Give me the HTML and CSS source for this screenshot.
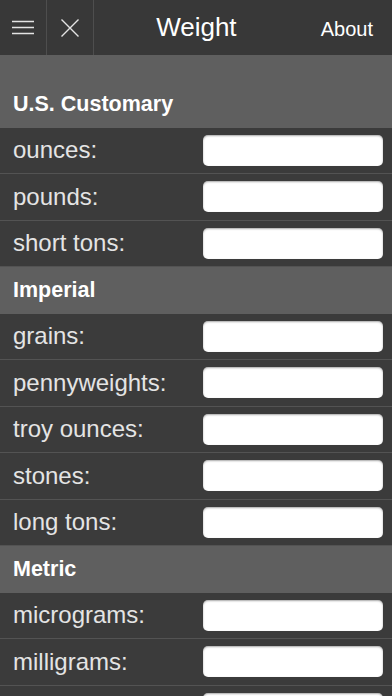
FILE: index.html
```html
<!DOCTYPE html>
<html lang="en">
<head>
    <meta charset="UTF-8">
    <meta name="viewport" content="width=device-width, initial-scale=1.0">
    <title>Weight</title>
    <link rel="stylesheet" href="styles.css">
</head>
<body>

<div class="topbar">
    <div class="bar-btn">
        <svg width="24" height="16" viewBox="0 0 24 16">
            <path d="M1 1.5h22M1 7.5h22M1 13.5h22" stroke="#e4e4e4" stroke-width="1.6" fill="none"/>
        </svg>
    </div>
    <div class="bar-btn">
        <svg width="20" height="20" viewBox="0 0 20 20">
            <path d="M1.5 1.5l17 17M18.5 1.5l-17 17" stroke="#e4e4e4" stroke-width="1.4" fill="none"/>
        </svg>
    </div>
    <div class="title">Weight</div>
    <div class="about">About</div>
</div>

<div class="spacer"></div>

<div class="section-title">U.S. Customary</div>
<div class="row"><label>ounces:</label><input type="text"></div>
<div class="row"><label>pounds:</label><input type="text"></div>
<div class="row"><label>short tons:</label><input type="text"></div>

<div class="section-title">Imperial</div>
<div class="row"><label>grains:</label><input type="text"></div>
<div class="row"><label>pennyweights:</label><input type="text"></div>
<div class="row"><label>troy ounces:</label><input type="text"></div>
<div class="row"><label>stones:</label><input type="text"></div>
<div class="row"><label>long tons:</label><input type="text"></div>

<div class="section-title">Metric</div>
<div class="row"><label>micrograms:</label><input type="text"></div>
<div class="row"><label>milligrams:</label><input type="text"></div>
<div class="row"><label></label><input type="text"></div>

</body>
</html>
```

FILE: styles.css
```css
html, body {
    margin: 0;
    padding: 0;
    height: 696px;
    overflow: hidden;
}
body {
    font-family: 'Liberation Sans', Arial, Helvetica, sans-serif;
    background-color: #3b3b3b;
    color: #e8e8e8;
}

.topbar {
    height: 55px;
    background: #383838;
    display: flex;
    align-items: stretch;
}
.bar-btn {
    width: 46px;
    border-right: 1.5px solid #4e4e4e;
    display: flex;
    align-items: center;
    justify-content: center;
}
.bar-btn svg { display: block; }
.title {
    flex: 1;
    display: flex;
    align-items: center;
    justify-content: center;
    font-size: 26px;
    color: #fff;
    padding-right: 22px;
    padding-bottom: 1px;
}
.about {
    display: flex;
    align-items: center;
    font-size: 20px;
    color: #fff;
    padding-right: 19px;
    padding-top: 3px;
}

.spacer {
    height: 26px;
    background: #5f5f5f;
}
.section-title {
    height: 46.5px;
    line-height: 46.5px;
    background: #5f5f5f;
    color: #fff;
    font-weight: bold;
    font-size: 21.5px;
    padding-left: 13px;
    box-sizing: border-box;
}

.row {
    height: 46.5px;
    box-sizing: border-box;
    border-bottom: 1px solid #535353;
    background: #3b3b3b;
    display: flex;
    align-items: center;
    justify-content: space-between;
    padding: 0 9px 0 13px;
}
.row label {
    font-size: 24px;
    color: #e4e4e4;
}
.row input {
    width: 180px;
    height: 31px;
    box-sizing: border-box;
    border: none;
    border-radius: 5px;
    background: #fff;
    box-shadow: inset 0 1px 2px rgba(0,0,0,0.35);
    margin: 0;
    padding: 0 6px;
    font-size: 18px;
}
```
